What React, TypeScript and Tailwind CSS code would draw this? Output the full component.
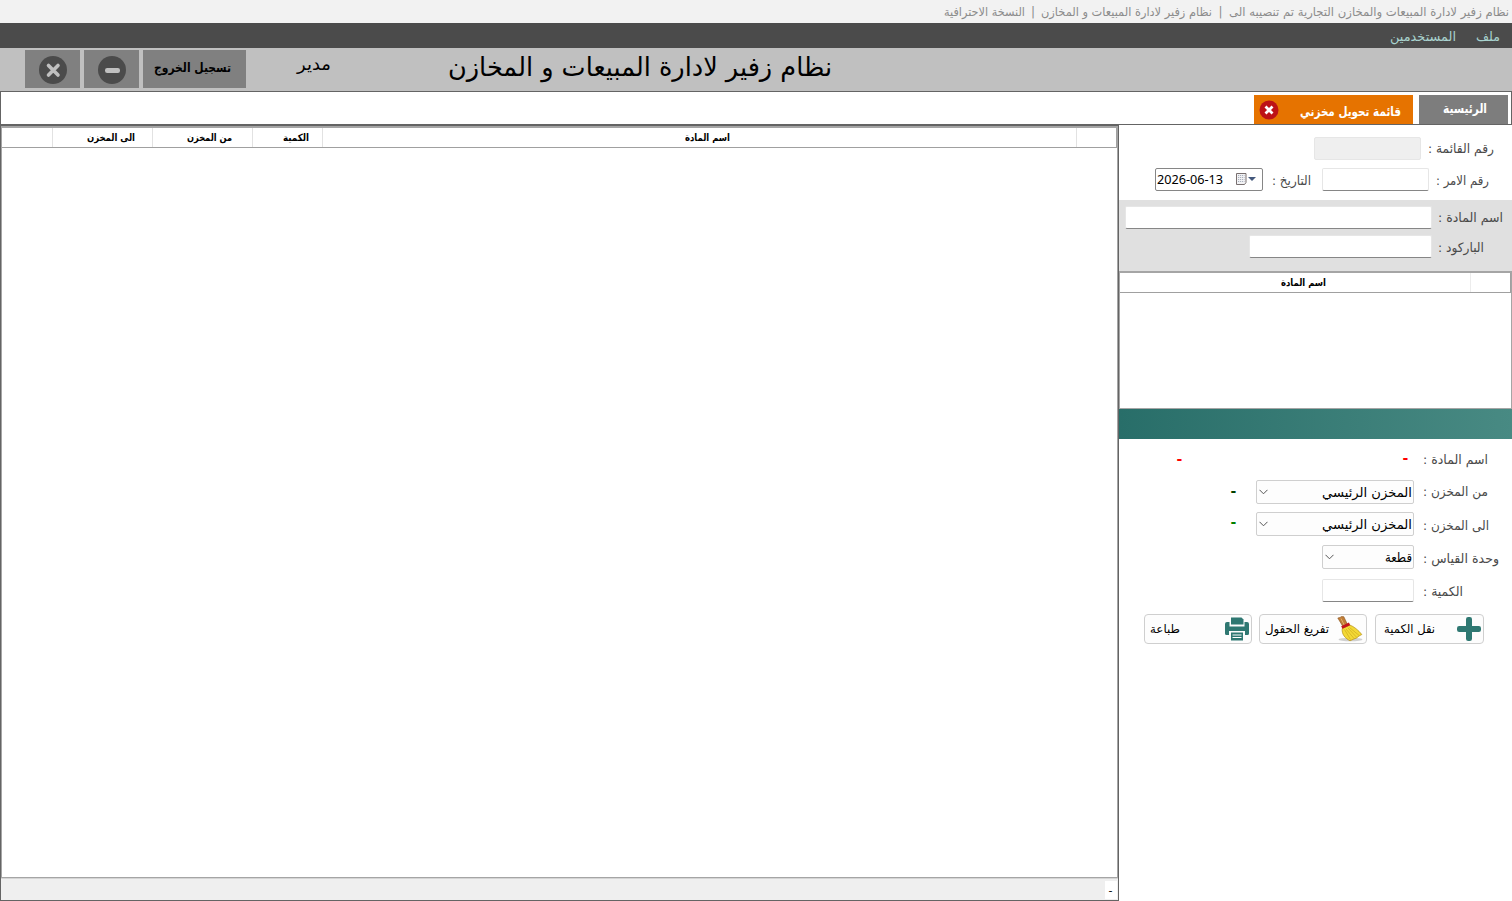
import { useLayoutEffect, useRef, useState } from 'react';
import type { ReactNode } from 'react';

// Text that is stretched to exactly fill the width of its box
function Fit({ className = '', children }: { className?: string; children: ReactNode }) {
  const box = useRef<HTMLSpanElement>(null);
  const inner = useRef<HTMLSpanElement>(null);
  const [scale, setScale] = useState(1);

  useLayoutEffect(() => {
    if (box.current && inner.current && inner.current.offsetWidth > 0) {
      setScale(box.current.clientWidth / inner.current.getBoundingClientRect().width);
    }
  }, []);

  return (
    <span ref={box} dir="ltr" className={`block shrink-0 whitespace-nowrap leading-none ${className}`}>
      <span ref={inner} dir="rtl" className="inline-block origin-left" style={{ transform: `scaleX(${scale})` }}>
        {children}
      </span>
    </span>
  );
}

function TextBox({ className = '' }: { className?: string }) {
  return (
    <input
      type="text"
      className={`h-[23px] shrink-0 rounded-[2px] border border-[#e6e6e6] border-b-[#868686] bg-white outline-none ${className}`}
    />
  );
}

function Select({ className = '', children }: { className?: string; children: ReactNode }) {
  return (
    <div className={`flex h-6 shrink-0 items-center justify-between rounded-[2px] border border-[#cfcfcf] bg-[#fdfdfd] pl-[2px] pr-px ${className}`}>
      <svg width="9" height="6" viewBox="0 0 9 6" fill="none" stroke="#555" strokeWidth="1">
        <path d="M0.5 0.8l4 4 4-4" />
      </svg>
      {children}
    </div>
  );
}

function ActionButton({ className = '', children }: { className?: string; children: ReactNode }) {
  return (
    <button className={`flex h-[30px] shrink-0 items-center justify-between rounded-[4px] border border-[#cfcfcf] bg-[#fdfdfd] text-[12px] text-black ${className}`}>
      {children}
    </button>
  );
}

function Dash({ className = '' }: { className?: string }) {
  return (
    <span className={`flex w-[5px] shrink-0 justify-center text-[14px] font-bold leading-none ${className}`}>-</span>
  );
}

function PlusIcon() {
  return (
    <svg width="24" height="24" viewBox="0 0 24 24" fill="#2f7872">
      <rect x="9" y="0" width="6" height="24" rx="2.2" />
      <rect x="0" y="9" width="24" height="6" rx="2.2" />
    </svg>
  );
}

function PrinterIcon() {
  return (
    <svg width="24" height="24" viewBox="0 0 24 24" fill="#2f7872">
      <path d="M6 .5h10.500L18.500 2.500V7.500H6z" />
      <path d="M0 7Q0 5 2 5h2.500v4.500h15V5H22q2 0 2 2v9.500q0 1.500-1.500 1.500H20V14H4v4H1.500Q0 18 0 16.500z" />
      <path d="M6 15.500h12V23.500H6z" />
      <path stroke="#fff" d="M7.500 18h9M7.500 20.500h9" />
    </svg>
  );
}

function BroomIcon() {
  return (
    <svg width="26" height="26" viewBox="0 0 26 26">
      <ellipse cx="13.500" cy="23.500" rx="12" ry="1.800" fill="#d0d0d0" />
      <path fill="#c07d38" stroke="#8a521b" strokeWidth=".6" d="M.8 2l2.400-.6 1.200-.9 2.400.2 3.700 7.800-4.300 2.500z" />
      <path stroke="#e0ac68" strokeWidth="1" d="M4 2.500l3.500 7" />
      <path fill="#f3d936" stroke="#b58e12" strokeWidth=".7" d="M5.200 12.500l7.600-3.500c4 1.500 8.500 5 12 9.500L22 20l-2.500 2-3 1.200-3.500 1.600C8.500 22.500 4.500 18.500 5.200 12.500z" />
      <path stroke="#bf9716" strokeWidth=".5" fill="none" d="M7.500 13.500l6 10M9 13l8 9.500M11 12l8.800 9.500M12.500 11.500l9.700 8" />
      <path stroke="#c4161c" strokeWidth="3" d="M4.800 11.500l7.800-3.700" />
    </svg>
  );
}

function TitleBar() {
  return (
    <div className="flex h-[23px] items-center justify-end bg-[#f2f2f2] pr-[3px] text-[12px] text-[#8c8c8c]">
      <Fit className="w-[81px]">النسخة الاحترافية</Fit>
      <span className="flex w-4 justify-center leading-none">|</span>
      <Fit className="w-[171px]">نظام زفير لادارة المبيعات و المخازن</Fit>
      <span className="flex w-[17px] justify-center leading-none">|</span>
      <Fit className="w-[280px]">نظام زفير لادارة المبيعات والمخازن التجارية تم تنصيبه الى</Fit>
    </div>
  );
}

function MenuBar() {
  return (
    <div className="flex h-[25px] items-center justify-end gap-[20px] bg-[#4b4b4b] pr-3 pt-px text-[13px] text-[#a9d3cf]">
      <Fit className="w-[66px]">المستخدمين</Fit>
      <Fit className="w-[24px]">ملف</Fit>
    </div>
  );
}

function Header() {
  return (
    <div className="flex h-[43px] items-start bg-[#c0c0c0] pl-[25px] pt-[2px] text-black">
      <button className="flex h-[38px] w-[55px] items-center justify-center bg-[#808080] pt-[2px]">
        <svg width="28" height="28" viewBox="0 0 28 28">
          <circle cx="14" cy="14" r="14" fill="#4b4b4b" />
          <path d="M9.500 9.500l9.500 9.500M19 9.500L9.500 19" stroke="#c0c0c0" strokeWidth="3.600" strokeLinecap="round" />
        </svg>
      </button>
      <button className="ml-1 flex h-[38px] w-[55px] items-center justify-center bg-[#808080] pt-[2px]">
        <svg width="28" height="28" viewBox="0 0 28 28">
          <circle cx="14" cy="14" r="14" fill="#4b4b4b" />
          <rect x="7" y="12" width="15" height="5" rx="2.200" fill="#c0c0c0" />
        </svg>
      </button>
      <button className="ml-1 flex h-[38px] w-[103px] items-center bg-[#808080] pb-[3px] pl-[11px] text-[13px] font-bold">
        <Fit className="w-[77px]">تسجيل الخروج</Fit>
      </button>
      <Fit className="ml-[51px] mt-[6px] w-[34px] text-[17px]">مدير</Fit>
      <Fit className="ml-[117px] mt-1 w-[384px] text-[26px]">نظام زفير لادارة المبيعات و المخازن</Fit>
    </div>
  );
}

function Tabs() {
  return (
    <div className="flex h-[34px] items-start justify-end gap-[6px] border border-[#646464] bg-white pr-[3px] pt-[3px] font-bold text-white">
      <div className="flex h-[29px] w-[159px] items-center bg-[#e67300] pl-[5px] text-[13px]">
        <svg width="20" height="20" viewBox="0 0 20 20">
          <circle cx="10" cy="10" r="9.500" fill="#bd1216" />
          <path d="M6.500 6.500l7 7M13.500 6.500l-7 7" stroke="#fff" strokeWidth="2.800" />
        </svg>
        <Fit className="ml-[21px] mt-1 w-[101px]">قائمة تحويل مخزني</Fit>
      </div>
      <div className="flex h-[29px] w-[89px] items-center bg-[#7d7d7d] pb-[2px] pl-6 text-[13px]">
        <Fit className="w-[44px]">الرئيسية</Fit>
      </div>
    </div>
  );
}

function TransferTable() {
  return (
    <div className="flex w-[1119px] shrink-0 flex-col border border-[#646464] bg-white">
      <div className="flex grow flex-col border-b border-l border-r border-t-2 border-[#a5a5a5]">
        <div className="flex h-5 border-b border-r border-[#a0a0a0] text-[10px] font-bold text-black">
          <div className="w-[51px] border-r border-[#e2e2e2]" />
          <div className="flex w-[100px] items-center border-r border-[#e2e2e2] pl-[34px]">
            <Fit className="w-[48px]">الى المخزن</Fit>
          </div>
          <div className="flex w-[100px] items-center border-r border-[#e2e2e2] pl-[34px]">
            <Fit className="w-[45px]">من المخزن</Fit>
          </div>
          <div className="flex w-[70px] items-center border-r border-[#e2e2e2] pl-[30px]">
            <Fit className="w-[26px]">الكمية</Fit>
          </div>
          <div className="flex w-[754px] items-center border-r border-[#e2e2e2] pl-[362px]">
            <Fit className="w-[45px]">اسم المادة</Fit>
          </div>
        </div>
      </div>
      <div className="flex h-[22px] justify-end border-t border-[#d5d5d5] bg-[#efefef] pb-px pt-[2px]">
        <div className="mr-px flex w-3 items-center justify-center bg-white pr-px text-[11px] leading-none text-black">-</div>
      </div>
    </div>
  );
}

function SidePanel() {
  return (
    <div className="flex grow flex-col bg-white text-[13px] text-[#4a4a4a]">
      <div className="flex h-[75px] flex-col gap-2 pt-3">
        <div className="flex h-[23px] items-center pl-[195px]">
          <div className="h-[23px] w-[107px] rounded-[2px] border border-[#e6e6e6] bg-[#efefef]" />
          <Fit className="ml-[7px] w-[66px]">رقم القائمة :</Fit>
        </div>
        <div className="flex h-[23px] items-center pl-9">
          <div className="flex h-[23px] w-[108px] items-center rounded-[2px] border border-[#868686] bg-white pl-px text-black">
            <Fit className="w-[66px] font-['Noto_Sans'] text-[12px]">2026-06-13</Fit>
            <svg className="ml-3" width="22" height="13" viewBox="0 0 22 13">
              <path d="M1.500 .5h9.500v9L9.500 11.500h-8z" fill="#f2f2f4" stroke="#786f6f" />
              <path d="M3 2.500h6.500M3 4.500h6.500M3 6.500h6.500M3 8.500h6.500" stroke="#a9b0bd" strokeDasharray="1.200 .8" />
              <path d="M13 4h8L17 8z" fill="#44587c" />
            </svg>
          </div>
          <Fit className="ml-[9px] mt-px w-[39px]">التاريخ :</Fit>
          <TextBox className="ml-[11px] w-[107px]" />
          <Fit className="ml-[7px] mt-px w-[53px]">رقم الامر :</Fit>
        </div>
      </div>

      <div className="flex h-[71px] flex-col gap-[6px] bg-[#e0e0e0] pt-[6px]">
        <div className="flex items-center pl-[6px]">
          <TextBox className="w-[307px]" />
          <Fit className="ml-[6px] w-[65px]">اسم المادة :</Fit>
        </div>
        <div className="flex items-center pl-[130px]">
          <TextBox className="w-[183px]" />
          <Fit className="ml-[6px] mt-[2px] w-[46px]">الباركود :</Fit>
        </div>
      </div>

      <div className="h-[138px] border-b border-l border-r border-t-2 border-[#a5a5a5]">
        <div className="flex h-5 border-b border-r border-[#a0a0a0] text-[10px] font-bold text-black">
          <div className="flex w-[351px] items-center border-r border-[#ececec] pl-[161px]">
            <Fit className="w-[45px]">اسم المادة</Fit>
          </div>
        </div>
      </div>
      <div className="h-[30px] bg-linear-to-r from-[#286e69] to-[#488a83]" />

      <div className="flex flex-col">
        <div className="mt-2 flex h-6 items-center pl-[58px]">
          <Dash className="text-[#ff0000]" />
          <Dash className="mb-[2px] ml-[221px] text-[#ff0000]" />
          <Fit className="ml-[15px] w-[65px]">اسم المادة :</Fit>
        </div>
        <div className="mt-[9px] flex h-6 items-center pl-[112px]">
          <Dash className="mb-[2px] text-[#004000]" />
          <Select className="ml-5 w-[158px]">
            <Fit className="w-[90px] text-black">المخزن الرئيسي</Fit>
          </Select>
          <Fit className="mb-[2px] ml-[9px] w-[65px]">من المخزن :</Fit>
        </div>
        <div className="mt-2 flex h-6 items-center pl-[112px]">
          <Dash className="mb-1 text-[#008000]" />
          <Select className="ml-5 w-[158px]">
            <Fit className="w-[90px] text-black">المخزن الرئيسي</Fit>
          </Select>
          <Fit className="ml-[9px] mt-[2px] w-[66px]">الى المخزن :</Fit>
        </div>
        <div className="mt-[9px] flex h-6 items-center pl-[203px]">
          <Select className="w-[92px]">
            <Fit className="w-[27px] text-black">قطعة</Fit>
          </Select>
          <Fit className="ml-[9px] mt-[2px] w-[76px]">وحدة القياس :</Fit>
        </div>
        <div className="mt-[10px] flex h-[23px] items-center pl-[203px]">
          <TextBox className="w-[92px]" />
          <Fit className="ml-[9px] mt-[2px] w-[40px]">الكمية :</Fit>
        </div>
        <div className="mt-3 flex pl-[25px]">
          <ActionButton className="w-[108px] pl-[5px] pr-[2px]">
            <Fit className="w-[30px]">طباعة</Fit>
            <PrinterIcon />
          </ActionButton>
          <ActionButton className="ml-[7px] w-[108px] pl-[5px] pr-[3px]">
            <Fit className="w-[64px]">تفريغ الحقول</Fit>
            <BroomIcon />
          </ActionButton>
          <ActionButton className="ml-2 w-[109px] pl-2 pr-[2px]">
            <Fit className="w-[51px]">نقل الكمية</Fit>
            <PlusIcon />
          </ActionButton>
        </div>
      </div>
    </div>
  );
}

export default function App() {
  return (
    <div className="flex h-[901px] w-[1512px] flex-col overflow-hidden bg-white font-['DejaVu_Sans',sans-serif]">
      <TitleBar />
      <MenuBar />
      <Header />
      <Tabs />
      <div className="flex grow">
        <TransferTable />
        <SidePanel />
      </div>
    </div>
  );
}
